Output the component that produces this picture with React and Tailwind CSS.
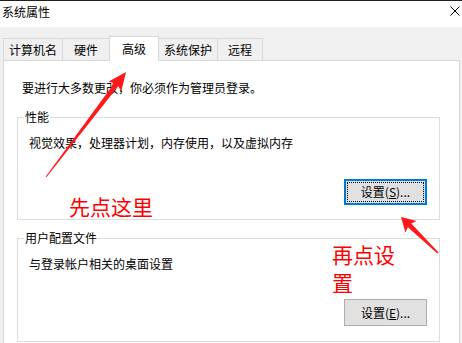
import React from 'react';

const Tab = ({ label, className }) => (
  <div className={`flex h-[22px] items-center justify-center border-t border-[#d9d9d9] bg-[#f0f0f0] ${className}`}>
    {label}
  </div>
);

const GroupBox = ({ title, text, children, className }) => (
  <fieldset className={`ml-[13px] mr-[19px] border border-[#dcdcdc] ${className}`}>
    <legend className="ml-[6px] px-[1px]">{title}</legend>
    <div className="pl-[11px] pr-[12px]">{children(text)}</div>
  </fieldset>
);

const App = () => {
  return (
    <div className="relative h-[343px] w-[462px] overflow-hidden bg-[#f0f0f0] font-['Noto_Sans_CJK_SC','Noto_Sans',sans-serif] text-[12px] leading-[16px] text-black">
      {/* Title bar */}
      <div className="flex h-[27px] items-start justify-between border-t border-[#1f1f1f] bg-white pl-[2px] pr-[2px]">
        <span className="pt-[3px]">系统属性</span>
        <svg className="mt-[5px]" width="10" height="10" viewBox="0 0 10 10">
          <path d="M0.5 0.5 L9.5 9.5 M9.5 0.5 L0.5 9.5" stroke="#000" strokeWidth="1" fill="none" />
        </svg>
      </div>

      <div className="pl-[3px] pr-[2px] pt-[9px]">
        {/* Tabs */}
        <div className="flex h-[24px] items-end">
          <Tab label="计算机名" className="w-[59px] border-l" />
          <Tab label="硬件" className="w-[47px] border-l" />
          <div className="relative z-10 -mb-px flex h-[25px] w-[50px] items-center justify-center border-x border-t border-[#d9d9d9] bg-white">
            高级
          </div>
          <Tab label="系统保护" className="w-[58px]" />
          <Tab label="远程" className="w-[46px] border-x" />
        </div>

        {/* Panel */}
        <div className="h-[300px] border border-[#d9d9d9] bg-white pt-[19px]">
          <p className="pl-[18px]">要进行大多数更改，你必须作为管理员登录。</p>

          <GroupBox title="性能" text="视觉效果，处理器计划，内存使用，以及虚拟内存" className="mt-[13px] pb-[14px]">
            {(text) => (
              <>
                <p className="mt-[10px]">{text}</p>
                <div className="mt-[28px] flex justify-end">
                  <button className="h-[26px] w-[83px] border-2 border-[#0078d7] bg-[#e1e1e1] outline-1 outline-offset-[-4px] outline-dotted outline-black">
                    设置(<span className="underline">S</span>)...
                  </button>
                </div>
              </>
            )}
          </GroupBox>

          <GroupBox title="用户配置文件" text="与登录帐户相关的桌面设置" className="mt-[10px] pb-[15px]">
            {(text) => (
              <>
                <p className="mt-[10px]">{text}</p>
                <div className="mt-[27px] flex justify-end">
                  <button className="h-[27px] w-[83px] border border-[#adadad] bg-[#e1e1e1]">
                    设置(<span className="underline">E</span>)...
                  </button>
                </div>
              </>
            )}
          </GroupBox>
        </div>
      </div>

      {/* Annotations */}
      <div className="absolute left-[69px] top-[196px] text-[21px] leading-[21px] text-[#ff0000]">先点这里</div>
      <div className="absolute left-[332px] top-[240px] w-[66px] text-[21px] leading-[28px] text-[#ff0000]">再点设置</div>

      <svg className="pointer-events-none absolute inset-0" width="462" height="343" viewBox="0 0 462 343">
        <polygon
          fill="#ff1a1a"
          points="126,72 121.3,91.2 118.2,86.2 46.4,177.3 45.6,176.7 114.2,83.2 108.7,81.4"
        />
        <polygon
          fill="#ff1a1a"
          points="401,217 416.6,221.1 411.3,223.6 438.6,252.4 437.4,253.6 407.9,227.2 405.4,232.5"
        />
      </svg>
    </div>
  );
};

export default App;
